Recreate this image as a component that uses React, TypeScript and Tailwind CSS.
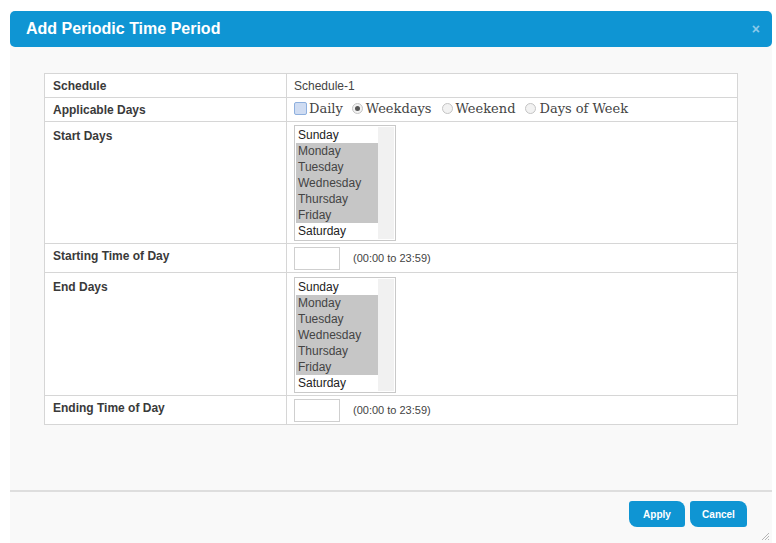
import React from "react";

const DAYS = ["Sunday", "Monday", "Tuesday", "Wednesday", "Thursday", "Friday", "Saturday"];
const SELECTED = new Set(["Monday", "Tuesday", "Wednesday", "Thursday", "Friday"]);

function DayList() {
  return (
    <div className="flex h-[116px] w-[102px] border border-[#c9c9c9] bg-white p-px">
      <div className="flex flex-1 flex-col">
        {DAYS.map((d) => (
          <div
            key={d}
            className={`h-[16px] pl-[2px] text-[12px] leading-[16px] text-[#222] ${
              SELECTED.has(d) ? "bg-[#c6c6c6] text-[#444]" : "bg-white"
            }`}
          >
            {d}
          </div>
        ))}
      </div>
      <div className="w-[16px] bg-[#f1f1f1]" />
    </div>
  );
}

function TimeField() {
  return (
    <div className="flex items-center gap-[13px]">
      <div className="h-[23px] w-[46px] border border-[#cfcfcf] bg-white" />
      <span className="text-[11px] text-[#444]">(00:00 to 23:59)</span>
    </div>
  );
}

function Radio({ on }: { on?: boolean }) {
  return (
    <span className="inline-flex h-[11px] w-[11px] items-center justify-center rounded-full border border-[#c4c4c4] bg-[#f2f2f2]">
      {on && <span className="h-[5px] w-[5px] rounded-full bg-[#555]" />}
    </span>
  );
}

export default function App() {
  const label = "border border-[#d6d6d6] px-[8px] align-top text-[12px] font-bold text-[#3a3a3a]";
  const value = "border border-[#d6d6d6] px-[7px] align-top";
  return (
    <div
      className="h-[543px] w-[776px] overflow-hidden bg-white"
      style={{ fontFamily: '"Liberation Sans", Arial, sans-serif' }}
    >
      <div className="ml-[10px] mt-[11px] flex h-[532px] w-[762px] flex-col bg-[#f9f9f9]">
        <div className="flex h-[36px] items-center justify-between rounded-[5px] bg-[#0f95d3] pl-[16px] pr-[12px]">
          <span className="text-[16px] font-bold text-white">Add Periodic Time Period</span>
          <span className="text-[14px] font-bold leading-none text-[#8ccaea]">×</span>
        </div>

        <div className="ml-[34px] mt-[26px] w-[694px]">
          <table className="w-full border-collapse bg-white">
            <tbody>
              <tr className="h-[24px]">
                <td className={`${label} w-[242px] pt-[3px] align-middle`}>Schedule</td>
                <td className={`${value} pt-[3px] align-middle text-[12px] text-[#444]`}>Schedule-1</td>
              </tr>
              <tr className="h-[24px]">
                <td className={`${label} pt-[3px] align-middle`}>Applicable Days</td>
                <td className={`${value} pt-[1px] align-middle`}>
                  <div
                    className="flex items-center text-[13px] text-[#444]"
                    style={{ fontFamily: '"DejaVu Serif", "Times New Roman", serif' }}
                  >
                    <span className="mr-[2px] h-[13px] w-[13px] rounded-[2px] border border-[#8fb0de] bg-[#cfdcf2]" />
                    <span className="mr-[9px]">Daily</span>
                    <Radio on />
                    <span className="ml-[3px] mr-[10px]">Weekdays</span>
                    <Radio />
                    <span className="ml-[3px] mr-[10px]">Weekend</span>
                    <Radio />
                    <span className="ml-[3px]">Days of Week</span>
                  </div>
                </td>
              </tr>
              <tr className="h-[122px]">
                <td className={`${label} pt-[5px]`}>Start Days</td>
                <td className={`${value} pt-[3px]`}>
                  <DayList />
                </td>
              </tr>
              <tr className="h-[29px]">
                <td className={`${label} pt-[3px] align-middle`}>Starting Time of Day</td>
                <td className={`${value} pt-[3px] align-middle`}>
                  <TimeField />
                </td>
              </tr>
              <tr className="h-[123px]">
                <td className={`${label} pt-[5px]`}>End Days</td>
                <td className={`${value} pt-[4px]`}>
                  <DayList />
                </td>
              </tr>
              <tr className="h-[29px]">
                <td className={`${label} pt-[3px] align-middle`}>Ending Time of Day</td>
                <td className={`${value} pt-[3px] align-middle`}>
                  <TimeField />
                </td>
              </tr>
            </tbody>
          </table>
        </div>

        <div className="mt-[65px] border-t-2 border-[#dedede]" />

        <div className="relative flex flex-1 justify-end gap-[5px] pr-[25px] pt-[9px]">
          <button className="h-[26px] w-[56px] rounded-tl-[3px] rounded-tr-[8px] rounded-br-[3px] rounded-bl-[8px] bg-[#0f95d3] text-[10px] font-bold text-white">
            Apply
          </button>
          <button className="h-[26px] w-[57px] rounded-tl-[3px] rounded-tr-[8px] rounded-br-[3px] rounded-bl-[8px] bg-[#0f95d3] text-[10px] font-bold text-white">
            Cancel
          </button>
          <svg className="absolute bottom-[2px] right-[2px]" width="10" height="10" viewBox="0 0 10 10">
            <path d="M9 2 L2 9 M9 5 L5 9 M9 8 L8 9" stroke="#b5b5b5" strokeWidth="1" />
          </svg>
        </div>
      </div>
    </div>
  );
}
